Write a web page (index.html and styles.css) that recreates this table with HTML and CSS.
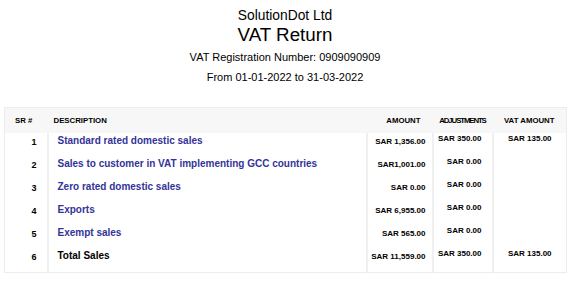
FILE: index.html
```html
<!DOCTYPE html>
<html>
<head>
<meta charset="utf-8">
<link rel="stylesheet" href="styles.css">
</head>
<body>
<div class="report">
  <header class="head">
    <div class="company">SolutionDot Ltd</div>
    <div class="title">VAT Return</div>
    <div class="reg">VAT Registration Number: 0909090909</div>
    <div class="period">From 01-01-2022 to 31-03-2022</div>
  </header>
  <table class="vat">
    <colgroup>
      <col class="c-sr"><col class="c-desc"><col class="c-amt"><col class="c-adj"><col class="c-vat">
    </colgroup>
    <thead>
      <tr>
        <th class="h-sr">SR #</th>
        <th class="h-desc">DESCRIPTION</th>
        <th class="h-amt">AMOUNT</th>
        <th class="h-adj">ADJUSTMENTS</th>
        <th class="h-vat">VAT AMOUNT</th>
      </tr>
    </thead>
    <tbody>
      <tr>
        <td class="sr">1</td>
        <td class="desc link">Standard rated domestic sales</td>
        <td class="amt">SAR 1,356.00</td>
        <td class="adj">SAR 350.00</td>
        <td class="vamt">SAR 135.00</td>
      </tr>
      <tr>
        <td class="sr">2</td>
        <td class="desc link">Sales to customer in VAT implementing GCC countries</td>
        <td class="amt">SAR1,001.00</td>
        <td class="adj">SAR 0.00</td>
        <td class="vamt"></td>
      </tr>
      <tr>
        <td class="sr">3</td>
        <td class="desc link">Zero rated domestic sales</td>
        <td class="amt">SAR 0.00</td>
        <td class="adj">SAR 0.00</td>
        <td class="vamt"></td>
      </tr>
      <tr>
        <td class="sr">4</td>
        <td class="desc link">Exports</td>
        <td class="amt">SAR 6,955.00</td>
        <td class="adj">SAR 0.00</td>
        <td class="vamt"></td>
      </tr>
      <tr>
        <td class="sr">5</td>
        <td class="desc link">Exempt sales</td>
        <td class="amt">SAR 565.00</td>
        <td class="adj">SAR 0.00</td>
        <td class="vamt"></td>
      </tr>
      <tr class="last">
        <td class="sr">6</td>
        <td class="desc">Total Sales</td>
        <td class="amt">SAR 11,559.00</td>
        <td class="adj">SAR 350.00</td>
        <td class="vamt">SAR 135.00</td>
      </tr>
    </tbody>
  </table>
</div>
</body>
</html>
```

FILE: styles.css
```css
html, body {
  margin: 0;
  padding: 0;
  background: #fff;
}
body {
  font-family: "Liberation Sans", Arial, sans-serif;
  color: #000;
}
.report {
  padding: 0 4px;
}
.head {
  display: flex;
  flex-direction: column;
  align-items: center;
  padding-top: 8px;
}
.company {
  font-size: 13.8px;
  line-height: 16px;
}
.title {
  font-size: 18.8px;
  line-height: 22px;
}
.reg {
  margin-top: 5px;
  font-size: 11px;
  line-height: 13px;
}
.period {
  margin-top: 7px;
  font-size: 11px;
  line-height: 13px;
}
.vat {
  margin-top: 23px;
  width: 562px;
  border-collapse: collapse;
  table-layout: fixed;
  border: 1px solid #ececec;
}
.c-sr { width: 43px; }
.c-desc { width: 319px; }
.c-amt { width: 66px; }
.c-adj { width: 60px; }
.c-vat { width: 74px; }
.vat thead tr {
  background: #f7f7f7;
  height: 25px;
}
.vat th {
  font-size: 7.8px;
  line-height: 9px;
  font-weight: bold;
  padding: 0;
  vertical-align: middle;
  white-space: nowrap;
}
.h-sr { text-align: left; padding-left: 10px !important; }
.h-desc { text-align: left; padding-left: 6px !important; }
.h-amt { text-align: right; padding-right: 12px !important; }
.h-adj { text-align: center; letter-spacing: -1.1px; }
.h-vat { text-align: center; }
.vat tbody tr { height: 23px; }
.vat tbody tr.last { height: 25px; }
.vat td {
  padding: 0;
  vertical-align: top;
  font-weight: bold;
  line-height: 10px;
  border-left: 2px solid #f0f0f0;
  white-space: nowrap;
}
.vat td:first-child { border-left: none; }
.sr {
  font-size: 9px;
  text-align: right;
  padding-right: 10px !important;
  padding-top: 4px !important;
}
.desc {
  font-size: 10px;
  line-height: 12px !important;
  padding-left: 9px !important;
  padding-top: 2px !important;
}
.link { color: #333399; }
.amt {
  font-size: 8px;
  text-align: right;
  padding-right: 6px !important;
  padding-top: 4px !important;
}
.adj {
  font-size: 8px;
  text-align: right;
  padding-right: 10px !important;
  padding-top: 1px !important;
}
.vamt {
  font-size: 8px;
  text-align: center;
  padding-top: 1px !important;
}
```
